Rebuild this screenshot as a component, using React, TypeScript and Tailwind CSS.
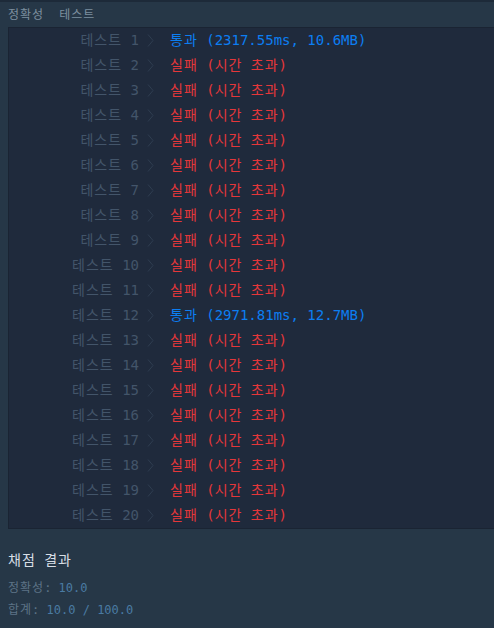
const rows = [
  { n: 1, pass: true, detail: "(2317.55ms, 10.6MB)" },
  ...Array.from({ length: 10 }, (_, i) => ({ n: i + 2, pass: false, detail: "" })),
  { n: 12, pass: true, detail: "(2971.81ms, 12.7MB)" },
  ...Array.from({ length: 8 }, (_, i) => ({ n: i + 13, pass: false, detail: "" })),
]

const mono = "font-['DejaVu_Sans_Mono','Noto_Sans_CJK_KR',monospace]"

function Ko({ children }: { children: string }) {
  return <span className="tracking-[1px]">{children}</span>
}

function Chevron() {
  return (
    <svg width="7" height="13" viewBox="0 0 7 13" className="shrink-0">
      <path d="M1 0.5 L6 6.5 L1 12.5" fill="none" stroke="#2f3d50" strokeWidth="1" />
    </svg>
  )
}

export default function App() {
  return (
    <div className={`w-[494px] h-[628px] bg-[#263747] ${mono} overflow-hidden`}>
      <div className="h-[27px] border-t-2 border-[#1d2a39] flex items-center gap-[15px] px-[8px] text-[12px] text-[#7d8f9f]">
        <Ko>정확성</Ko>
        <Ko>테스트</Ko>
      </div>
      <div className="ml-[8px] border-l border-t border-b border-[#1a2433] bg-[#1f2a3c]">
        {rows.map((r) => (
          <div key={r.n} className="h-[25px] flex items-center text-[14px] whitespace-pre">
            <div className="w-[130px] text-right text-[#43556a]">
              <Ko>테스트</Ko> {r.n}
            </div>
            <div className="ml-[8px] mr-[16px] flex items-center">
              <Chevron />
            </div>
            <div className={r.pass ? "text-[#0c7ef2]" : "text-[#e5373a]"}>
              {r.pass ? (
                <>
                  <Ko>통과</Ko> {r.detail}
                </>
              ) : (
                <>
                  <Ko>실패</Ko> (<Ko>시간</Ko> <Ko>초과</Ko>)
                </>
              )}
            </div>
          </div>
        ))}
      </div>
      <div className="px-[8px] pt-[21px] whitespace-pre">
        <div className="text-[14px] text-[#d7dee5] h-[20px] leading-[20px]">
          <Ko>채점</Ko> <Ko>결과</Ko>
        </div>
        <div className="mt-[8px] text-[12px] h-[20px] leading-[20px]">
          <span className="text-[#5d7386]">
            <Ko>정확성</Ko>:{" "}
          </span>
          <span className="text-[#4a7ba3]">10.0</span>
        </div>
        <div className="mt-[2px] text-[12px] h-[20px] leading-[20px]">
          <span className="text-[#5d7386]">
            <Ko>합계</Ko>:{" "}
          </span>
          <span className="text-[#4a7ba3]">10.0 / 100.0</span>
        </div>
      </div>
    </div>
  )
}
